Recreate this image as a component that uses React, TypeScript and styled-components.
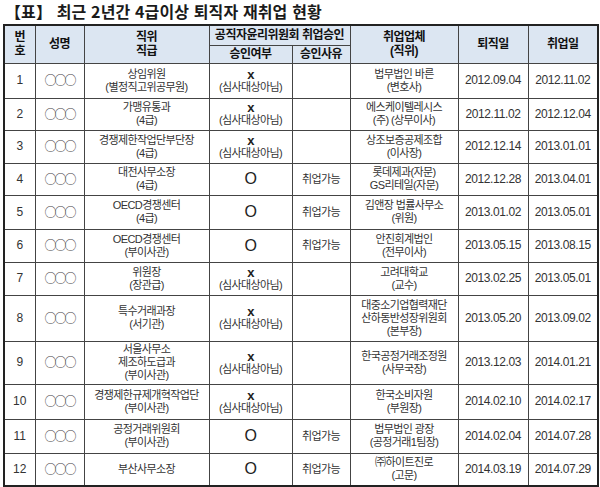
import React from "react";
import styled, { createGlobalStyle } from "styled-components";

const GlobalStyle = createGlobalStyle`
  html, body {
    margin: 0;
    padding: 0;
    background: #fff;
  }
  body {
    font-family: "Liberation Sans", "Noto Sans CJK KR", sans-serif;
    color: #333;
  }
`;

type Row = {
  no: number;
  position: string[];
  approved: boolean;
  employer: string[];
  retired: string;
  hired: string;
  height: number;
};

const rows: Row[] = [
  { no: 1, position: ["상임위원", "(별정직고위공무원)"], approved: false, employer: ["법무법인 바른", "(변호사)"], retired: "2012.09.04", hired: "2012.11.02", height: 35 },
  { no: 2, position: ["가맹유통과", "(4급)"], approved: false, employer: ["에스케이텔레시스", "(주) (상무이사)"], retired: "2012.11.02", hired: "2012.12.04", height: 32 },
  { no: 3, position: ["경쟁제한작업단부단장", "(4급)"], approved: false, employer: ["상조보증공제조합", "(이사장)"], retired: "2012.12.14", hired: "2013.01.01", height: 33 },
  { no: 4, position: ["대전사무소장", "(4급)"], approved: true, employer: ["롯데제과(자문)", "GS리테일(자문)"], retired: "2012.12.28", hired: "2013.04.01", height: 32 },
  { no: 5, position: ["OECD경쟁센터", "(4급)"], approved: true, employer: ["김앤장 법률사무소", "(위원)"], retired: "2013.01.02", hired: "2013.05.01", height: 34 },
  { no: 6, position: ["OECD경쟁센터", "(부이사관)"], approved: true, employer: ["안진회계법인", "(전무이사)"], retired: "2013.05.15", hired: "2013.08.15", height: 33 },
  { no: 7, position: ["위원장", "(장관급)"], approved: false, employer: ["고려대학교", "(교수)"], retired: "2013.02.25", hired: "2013.05.01", height: 33 },
  { no: 8, position: ["특수거래과장", "(서기관)"], approved: false, employer: ["대중소기업협력재단", "산하동반성장위원회", "(본부장)"], retired: "2013.05.20", hired: "2013.09.02", height: 46 },
  { no: 9, position: ["서울사무소", "제조하도급과", "(부이사관)"], approved: false, employer: ["한국공정거래조정원", "(사무국장)"], retired: "2013.12.03", hired: "2014.01.21", height: 43 },
  { no: 10, position: ["경쟁제한규제개혁작업단", "(부이사관)"], approved: false, employer: ["한국소비자원", "(부원장)"], retired: "2014.02.10", hired: "2014.02.17", height: 35 },
  { no: 11, position: ["공정거래위원회", "(부이사관)"], approved: true, employer: ["법무법인 광장", "(공정거래1팀장)"], retired: "2014.02.04", hired: "2014.07.28", height: 34 },
  { no: 12, position: ["부산사무소장"], approved: true, employer: ["㈜하이트진로", "(고문)"], retired: "2014.03.19", hired: "2014.07.29", height: 33 },
];

const colWidths = [31, 49, 125, 83, 58, 108, 70, 70];

const Page = styled.div`
  padding: 2px 3px 0 3px;
  width: 594px;
`;

const Title = styled.h1`
  margin: 0 0 0 2px;
  height: 22px;
  font-family: "Noto Sans CJK KR", sans-serif;
  font-size: 16px;
  line-height: 18px;
  font-weight: 700;
  color: #1a1a1a;
  letter-spacing: 0.1px;
  word-spacing: 1px;
  white-space: nowrap;
`;

const Table = styled.table`
  width: 594px;
  table-layout: fixed;
  border-collapse: collapse;
  border: 2px solid #222;
`;

const HeadCell = styled.th`
  background: #dce6f2;
  border: 1px solid #444;
  padding: 0;
  font-family: "Liberation Sans", "Noto Sans CJK KR", sans-serif;
  font-size: 12px;
  line-height: 14px;
  font-weight: 700;
  color: #111;
  text-align: center;
  vertical-align: middle;
  letter-spacing: -0.5px;
`;

const BodyRow = styled.tr<{ $h: number }>`
  height: ${(p) => p.$h}px;
`;

const Cell = styled.td`
  border: 1px solid #444;
  padding: 0;
  font-family: "Liberation Sans", "Noto Sans CJK KR", sans-serif;
  font-size: 11px;
  line-height: 13px;
  color: #333;
  text-align: center;
  vertical-align: middle;
  letter-spacing: -0.6px;
  white-space: nowrap;
  overflow: hidden;
`;

const NumCell = styled(Cell)`
  font-size: 12px;
  letter-spacing: 0;
`;

const DateCell = styled(Cell)`
  font-size: 12px;
  letter-spacing: -0.4px;
`;

const Names = styled.span`
  font-family: "Noto Sans CJK KR", sans-serif;
  font-size: 12px;
  letter-spacing: -2px;
  color: #444;
`;

const Mark = styled.div<{ $ok: boolean }>`
  font-size: ${(p) => (p.$ok ? "16px" : "13px")};
  font-weight: ${(p) => (p.$ok ? 400 : 700)};
  line-height: ${(p) => (p.$ok ? "18px" : "13px")};
  color: #222;
`;

export default function App() {
  return (
    <Page>
      <GlobalStyle />
      <Title>【표】 최근 2년간 4급이상 퇴직자 재취업 현황</Title>
      <Table>
        <colgroup>
          {colWidths.map((w, i) => (
            <col key={i} style={{ width: w }} />
          ))}
        </colgroup>
        <thead>
          <tr style={{ height: 20 }}>
            <HeadCell rowSpan={2}>
              번<br />호
            </HeadCell>
            <HeadCell rowSpan={2}>성명</HeadCell>
            <HeadCell rowSpan={2}>
              직위
              <br />
              직급
            </HeadCell>
            <HeadCell colSpan={2}>공직자윤리위원회 취업승인</HeadCell>
            <HeadCell rowSpan={2}>
              취업업체
              <br />
              (직위)
            </HeadCell>
            <HeadCell rowSpan={2}>퇴직일</HeadCell>
            <HeadCell rowSpan={2}>취업일</HeadCell>
          </tr>
          <tr style={{ height: 18 }}>
            <HeadCell>승인여부</HeadCell>
            <HeadCell>승인사유</HeadCell>
          </tr>
        </thead>
        <tbody>
          {rows.map((r) => (
            <BodyRow key={r.no} $h={r.height}>
              <NumCell>{r.no}</NumCell>
              <Cell>
                <Names>○○○</Names>
              </Cell>
              <Cell>
                {r.position.map((l, i) => (
                  <div key={i}>{l}</div>
                ))}
              </Cell>
              <Cell>
                {r.approved ? (
                  <Mark $ok>O</Mark>
                ) : (
                  <>
                    <Mark $ok={false}>x</Mark>
                    <div>(심사대상아님)</div>
                  </>
                )}
              </Cell>
              <Cell>{r.approved ? "취업가능" : ""}</Cell>
              <Cell>
                {r.employer.map((l, i) => (
                  <div key={i}>{l}</div>
                ))}
              </Cell>
              <DateCell>{r.retired}</DateCell>
              <DateCell>{r.hired}</DateCell>
            </BodyRow>
          ))}
        </tbody>
      </Table>
    </Page>
  );
}
